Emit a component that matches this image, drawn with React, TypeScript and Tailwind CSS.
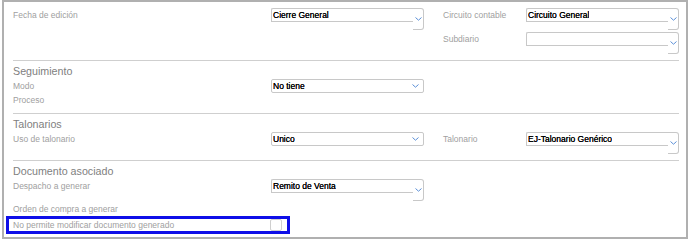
const font = { fontFamily: '"Liberation Sans", Arial, sans-serif' };

function Chevron() {
  return (
    <svg width="7" height="4" viewBox="0 0 7 4" className="block">
      <path d="M0.5 0.5 L3.5 3.2 L6.5 0.5" fill="none" stroke="#5b8fd6" strokeWidth="1" />
    </svg>
  );
}

function Select({ value }: { value?: string }) {
  return (
    <div className="flex h-[14px] w-[153px] items-center rounded-[2px] border border-[#c8c8c8] bg-white pl-[1px] pr-[4px]">
      <span className="flex-1 truncate text-[8.5px] leading-[12px] text-black [text-shadow:0_0_0.4px_#000]">{value}</span>
      <Chevron />
    </div>
  );
}

function TallSelect({ value }: { value?: string }) {
  return (
    <div className="flex h-[22px] w-[153px] items-start">
      <div className="flex h-[14px] flex-1 items-center rounded-tl-[2px] border-y border-l border-[#c8c8c8] bg-white pl-[1px]">
        <span className="truncate text-[8.5px] leading-[12px] text-black [text-shadow:0_0_0.4px_#000]">{value}</span>
      </div>
      <div className="flex h-[22px] w-[11px] items-center justify-center rounded-r-[3px] border-y border-r border-[#c8c8c8] bg-white">
        <Chevron />
      </div>
    </div>
  );
}

function Label({ children, w }: { children?: React.ReactNode; w: string }) {
  return (
    <div className={`${w} shrink-0 text-[8.5px] leading-[14px] text-[#a0a0a0]`}>{children}</div>
  );
}

function Heading({ children }: { children: React.ReactNode }) {
  return (
    <div className="pl-[9px] pt-[2px] text-[10.7px] leading-[16px] text-[#808080]">{children}</div>
  );
}

function Divider() {
  return <div className="ml-[9px] mt-[6px] h-px w-[666px] bg-[#cfcfcf]" />;
}

export default function App() {
  return (
    <div className="h-[242px] w-[690px] bg-white" style={font}>
      <div className="ml-[2px] flex h-[239px] w-[686px] flex-col border-2 border-[#b0b0b0] bg-white">
        <div className="flex h-[22px] pl-[9px] mt-[6px]">
          <Label w="w-[258px]">Fecha de edición</Label>
          <TallSelect value="Cierre General" />
          <div className="w-[19px]" />
          <Label w="w-[83px]">Circuito contable</Label>
          <TallSelect value="Circuito General" />
        </div>
        <div className="flex h-[22px] pl-[9px] mt-[2px]">
          <div className="w-[430px] shrink-0" />
          <Label w="w-[83px]">Subdiario</Label>
          <TallSelect />
        </div>
        <Divider />

        <Heading>Seguimiento</Heading>
        <div className="flex h-[14px] pl-[9px]">
          <Label w="w-[258px]">Modo</Label>
          <Select value="No tiene" />
        </div>
        <div className="flex h-[14px] pl-[9px]">
          <Label w="w-[258px]">Proceso</Label>
        </div>
        <Divider />

        <Heading>Talonarios</Heading>
        <div className="flex h-[22px] pl-[9px]">
          <Label w="w-[258px]">Uso de talonario</Label>
          <Select value="Unico" />
          <div className="w-[19px]" />
          <Label w="w-[83px]">Talonario</Label>
          <TallSelect value="EJ-Talonario Genérico" />
        </div>
        <Divider />

        <Heading>Documento asociado</Heading>
        <div className="flex h-[22px] pl-[9px]">
          <Label w="w-[258px]">Despacho a generar</Label>
          <TallSelect value="Remito de Venta" />
        </div>
        <div className="mt-[1px] flex h-[14px] pl-[9px]">
          <Label w="w-[258px]">Orden de compra a generar</Label>
        </div>
        <div className="ml-[2px] flex h-[18px] w-[284px] items-center border-[3px] border-[#0f0fe8] pl-[4px]">
          <Label w="w-[257px]">No permite modificar documento generado</Label>
          <div className="h-[12px] w-[12px] rounded-[2px] border border-[#cfcfcf] bg-white" />
        </div>
      </div>
    </div>
  );
}
